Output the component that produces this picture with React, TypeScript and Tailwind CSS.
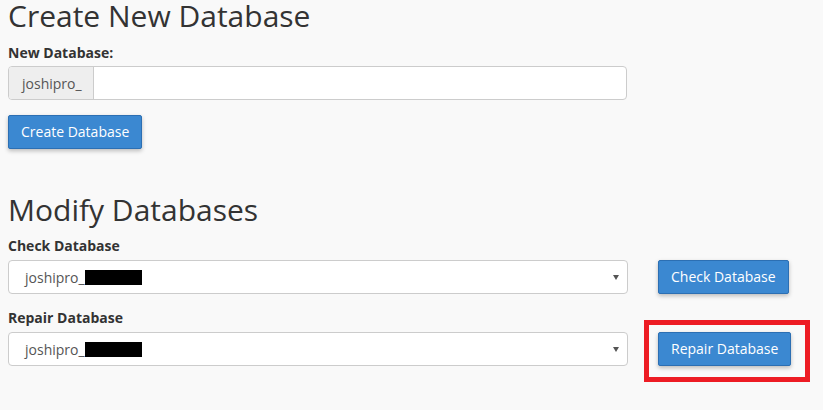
import React from "react";

const font = { fontFamily: '"Open Sans", "Noto Sans", sans-serif' };

function Btn({ children }: { children: React.ReactNode }) {
  return (
    <button className="h-[34px] px-[12px] rounded-[2px] border border-[#2c6fb3] bg-[#3b88d1] text-white text-[14px] leading-none shadow-[0_2px_4px_rgba(0,0,0,0.25)]">
      {children}
    </button>
  );
}

function Select() {
  return (
    <div className="relative w-[620px] h-[34px] rounded-[4px] border border-[#ccc] bg-white flex items-center pl-[16px]">
      <span className="text-[14px] text-[#555]">joshipro_</span>
      <span className="w-[57px] h-[15px] bg-black" />
      <span className="absolute right-[8px] top-[14px] w-0 h-0 border-l-[3.5px] border-r-[3.5px] border-t-[5px] border-l-transparent border-r-transparent border-t-[#555]" />
    </div>
  );
}

export default function App() {
  return (
    <div className="w-[823px] h-[410px] bg-[#f9f9f9] text-[#333] overflow-hidden" style={font}>
      <div className="pl-[8px]">
        <h1 className="text-[30px] leading-[32px] text-[#333]">Create New Database</h1>
        <div className="mt-[11px] text-[14px] font-bold leading-[20px] text-[#333]">New Database:</div>
        <div className="mt-[3px] flex w-[619px] h-[34px] rounded-[4px] border border-[#ccc] bg-white overflow-hidden">
          <div className="w-[85px] bg-[#eee] border-r border-[#ccc] flex items-center pl-[13px] text-[14px] text-[#555]">joshipro_</div>
          <div className="flex-1" />
        </div>
        <div className="mt-[15px]">
          <Btn>Create Database</Btn>
        </div>
        <h1 className="mt-[45px] text-[30px] leading-[32px] text-[#333]">Modify Databases</h1>
        <div className="mt-[10px] text-[14px] font-bold leading-[20px] text-[#333]">Check Database</div>
        <div className="mt-[4px] flex items-start">
          <Select />
          <div className="ml-[30px]">
            <Btn>Check Database</Btn>
          </div>
        </div>
        <div className="mt-[14px] text-[14px] font-bold leading-[20px] text-[#333]">Repair Database</div>
        <div className="mt-[4px] flex items-start">
          <Select />
          <div className="ml-[16px] -mt-[12px] border-[5px] border-[#ed1c24] pl-[9px] pr-[14px] pt-[7px] pb-[11px]">
            <Btn>Repair Database</Btn>
          </div>
        </div>
      </div>
    </div>
  );
}
